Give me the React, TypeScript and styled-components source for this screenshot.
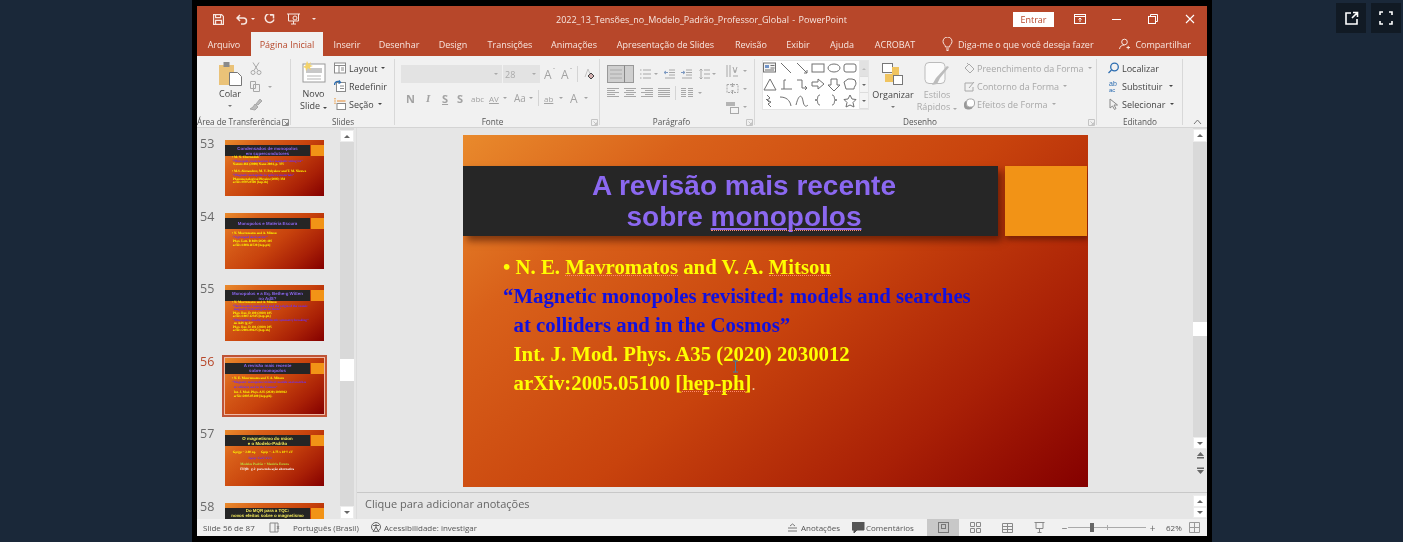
import React from "react";
import styled, { createGlobalStyle } from "styled-components";

const Global = createGlobalStyle`
  html, body { margin: 0; padding: 0; background: #1a2839; }
  * { box-sizing: border-box; }
`;

const Page = styled.div`
  position: relative;
  width: 1403px;
  height: 542px;
  overflow: hidden;
  background: #1a2839;
  display: flex;
  justify-content: center;
  padding-left: 1px;
  font-family: "Open Sans", "Liberation Sans", sans-serif;
`;

const Frame = styled.div`
  width: 1020px;
  height: 542px;
  background: #000;
  padding: 6px 5px;
`;

const Win = styled.div`
  position: relative;
  width: 1010px;
  height: 530px;
  display: flex;
  flex-direction: column;
  background: #e6e6e6;
  filter: blur(0.35px);
`;

const TitleBar = styled.div`
  height: 26px;
  background: #b7472a;
  display: flex;
  align-items: center;
  color: #f7e6e0;
  font-size: 9px;
`;

const Qat = styled.div`
  width: 340px;
  display: flex;
  align-items: center;
  padding-left: 16px;
`;

const DocTitle = styled.div`
  flex: 1;
  text-align: center;
  font-size: 9px;
  word-spacing: 1px;
  padding-right: 147px;
  white-space: nowrap;
`;

const SignIn = styled.div`
  width: 41px;
  height: 15px;
  background: #fff;
  color: #b7472a;
  font-size: 9px;
  display: flex;
  align-items: center;
  justify-content: center;
  margin-right: 20px;
`;

const WinBtns = styled.div`
  display: flex;
  align-items: center;
  width: 133px;
  color: #fff;
`;

const Tabs = styled.div`
  height: 24px;
  background: #b7472a;
  display: flex;
  align-items: stretch;
  font-size: 9px;
  color: #f7e6e0;
`;

const Tab = styled.div<{ $active?: boolean; $w: number }>`
  width: ${(p) => p.$w}px;
  display: flex;
  align-items: center;
  justify-content: center;
  white-space: nowrap;
  background: ${(p) => (p.$active ? "#f1f1f1" : "transparent")};
  color: ${(p) => (p.$active ? "#b7472a" : "inherit")};
`;

const TabSpacer = styled.div`
  flex: 1;
`;

const Tell = styled.div`
  display: flex;
  align-items: center;
  gap: 5px;
  width: 182px;
  padding-left: 18px;
  white-space: nowrap;
`;

const Share = styled.div`
  display: flex;
  align-items: center;
  gap: 5px;
  padding-right: 16px;
`;

const Ribbon = styled.div`
  height: 72px;
  background: #f1f1f1;
  border-bottom: 1px solid #d4d4d4;
  display: flex;
  font-size: 9px;
  color: #444;
`;

const Group = styled.div<{ $w: number; $last?: boolean }>`
  width: ${(p) => p.$w}px;
  position: relative;
  display: flex;
  flex-direction: column;
  padding-top: 5px;
  &::after {
    content: "";
    display: ${(p) => (p.$last ? "none" : "block")};
    position: absolute;
    right: 0;
    top: 3px;
    bottom: 2px;
    width: 1px;
    background: #d8d8d8;
  }
`;

const GroupBody = styled.div<{ $pl?: number }>`
  flex: 1;
  display: flex;
  min-height: 0;
  padding-left: ${(p) => p.$pl ?? 0}px;
`;

const GroupLabel = styled.div<{ $pr?: number }>`
  height: 11px;
  text-align: center;
  font-size: 8.2px;
  line-height: 11px;
  color: #555;
  white-space: nowrap;
  padding-right: ${(p) => p.$pr ?? 0}px;
`;

const Launcher = styled.svg<{ $c?: string }>`
  position: absolute;
  right: 2px;
  bottom: 1px;
  fill: none;
  stroke: ${(p) => p.$c ?? "#888"};
`;

const BigBtn = styled.div<{ $w: number; $muted?: boolean }>`
  width: ${(p) => p.$w}px;
  display: flex;
  flex-direction: column;
  align-items: center;
  font-size: 9px;
  line-height: 12px;
  color: ${(p) => (p.$muted ? "#aaa" : "#444")};
  text-align: center;
  white-space: nowrap;
`;

const BigLabel = styled.span<{ $mt?: number }>`
  margin-top: ${(p) => p.$mt ?? 0}px;
`;

const SmallCol = styled.div<{ $gap?: number; $ml?: number; $pl?: number; $mt?: number }>`
  display: flex;
  flex-direction: column;
  gap: ${(p) => p.$gap ?? 4}px;
  margin-left: ${(p) => p.$ml ?? 0}px;
  padding-left: ${(p) => p.$pl ?? 0}px;
  margin-top: ${(p) => p.$mt ?? 0}px;
`;

const SmallRow = styled.div<{ $muted?: boolean; $h?: number; $gap?: number; $mt?: number }>`
  height: ${(p) => p.$h ?? 14}px;
  display: flex;
  align-items: center;
  gap: ${(p) => p.$gap ?? 3}px;
  margin-top: ${(p) => p.$mt ?? 0}px;
  white-space: nowrap;
  font-size: 9px;
  color: ${(p) => (p.$muted ? "#a8a8a8" : "#444")};
`;

const Caret = styled.span<{
  $ml?: number;
  $mr?: number;
  $mt?: number;
  $up?: boolean;
  $s?: number;
  $c?: string;
}>`
  display: inline-block;
  flex-shrink: 0;
  width: 0;
  height: 0;
  margin-left: ${(p) => p.$ml ?? 0}px;
  margin-right: ${(p) => p.$mr ?? 0}px;
  margin-top: ${(p) => p.$mt ?? 0}px;
  border-left: ${(p) => p.$s ?? 2}px solid transparent;
  border-right: ${(p) => p.$s ?? 2}px solid transparent;
  border-top: ${(p) => (p.$up ? "none" : `${p.$s ?? 2}px solid ${p.$c ?? "currentColor"}`)};
  border-bottom: ${(p) => (p.$up ? `${p.$s ?? 2}px solid ${p.$c ?? "currentColor"}` : "none")};
`;

const FontBox = styled.div`
  width: 101px;
  height: 18px;
  background: #e3e3e3;
  display: flex;
  justify-content: flex-end;
  align-items: center;
  padding-right: 4px;
  color: #aaa;
`;

const SizeBox = styled.div`
  width: 37px;
  height: 18px;
  background: #e3e3e3;
  margin-left: 1px;
  display: flex;
  align-items: center;
  justify-content: space-between;
  padding: 0 4px 0 2px;
  color: #aaa;
  font-size: 9px;
`;

const FontRow = styled.div`
  display: flex;
  align-items: center;
  padding-left: 6px;
  margin-top: 4px;
  height: 18px;
`;

const GrowBtn = styled.span<{ $ml?: number }>`
  display: inline-flex;
  align-items: flex-start;
  gap: 1px;
  margin-left: ${(p) => p.$ml ?? 0}px;
  font-size: 12px;
  color: #a3a3a3;
  width: 16px;
`;

const Divider = styled.span<{ $h?: number; $ml?: number; $mr?: number }>`
  display: inline-block;
  flex-shrink: 0;
  width: 1px;
  height: ${(p) => p.$h ?? 16}px;
  background: #d4d4d4;
  margin-left: ${(p) => p.$ml ?? 0}px;
  margin-right: ${(p) => p.$mr ?? 0}px;
`;

const FmtRow = styled.div`
  display: flex;
  align-items: center;
  padding-left: 11px;
  height: 18px;
  margin-top: 6px;
  color: #a3a3a3;
`;

const Fmt = styled.span<{ $w: number; $u?: boolean; $i?: boolean; $s?: number; $n?: boolean }>`
  width: ${(p) => p.$w}px;
  font-size: ${(p) => p.$s ?? 11}px;
  font-weight: ${(p) => (p.$n ? "normal" : "bold")};
  font-style: ${(p) => (p.$i ? "italic" : "normal")};
  font-family: ${(p) => (p.$i ? '"Liberation Serif", serif' : "inherit")};
  text-decoration: ${(p) => (p.$u ? "underline" : "none")};
  white-space: nowrap;
  flex-shrink: 0;
`;

const ParaWrap = styled.div`
  display: flex;
  padding: 4px 0 0 7px;
`;

const ParaMain = styled.div`
  width: 119px;
`;

const ParaSide = styled.div`
  display: flex;
  flex-direction: column;
  gap: 1px;
  margin-top: -3px;
`;

const Gallery = styled.div`
  width: 107px;
  height: 50px;
  background: #fff;
  margin: -1px 0 0 7px;
  border: 1px solid #e4e4e4;
  display: flex;
`;

const GalleryRail = styled.div`
  width: 11px;
  display: flex;
  flex-direction: column;
  margin-left: auto;
  border-left: 1px solid #e6e6e6;
`;

const RailBtn = styled.div<{ $off?: boolean }>`
  flex: 1;
  background: ${(p) => (p.$off ? "#e2e2e2" : "#f4f4f4")};
  border-bottom: 1px solid #ddd;
  display: flex;
  align-items: center;
  justify-content: center;
  color: #666;
`;

const ShapeGrid = styled.div`
  display: grid;
  grid-template-columns: repeat(6, 16px);
  grid-auto-rows: 16px;
  padding: 1px 0 0 0;
  color: #707070;
`;

const Content = styled.div`
  flex: 1;
  display: flex;
  min-height: 0;
`;

const SidePane = styled.div`
  width: 143px;
  display: flex;
  background: #e6e6e6;
  overflow: hidden;
`;

const ThumbList = styled.div`
  width: 143px;
  display: flex;
  flex-direction: column;
  overflow: hidden;
  padding: 12px 0 0 3px;
  gap: 16.6px;
`;

const ThumbRow = styled.div`
  display: flex;
  gap: 12px;
  flex-shrink: 0;
`;

const ThumbNum = styled.div<{ $on?: boolean }>`
  width: 13px;
  font-size: 12.5px;
  line-height: 13px;
  margin-top: -3px;
  color: ${(p) => (p.$on ? "#b7472a" : "#6a6a6a")};
`;

const ThumbOuter = styled.div<{ $on?: boolean }>`
  width: 99px;
  height: 56px;
  outline: ${(p) => (p.$on ? "2px solid #bf5436" : "none")};
  outline-offset: ${(p) => (p.$on ? "1px" : "0")};
  box-shadow: ${(p) => (p.$on ? "0 0 0 1px #efb9a6" : "none")};
`;

const Gradient = styled.div`
  background: linear-gradient(140deg, #e98a2c 0%, #d9611a 22%, #c8430d 52%, #a92006 78%, #840000 100%);
`;

const ThumbSlide = styled(Gradient)`
  width: 99px;
  height: 56px;
  overflow: hidden;
  display: flex;
  flex-direction: column;
  text-rendering: geometricPrecision;
`;

const ThumbHead = styled.div`
  margin-top: 5px;
  height: 11px;
  display: flex;
  gap: 1px;
  flex-shrink: 0;
`;

const ThumbBand = styled.div<{ $yellow?: boolean }>`
  width: 85px;
  background: #252525;
  color: ${(p) => (p.$yellow ? "#f2e85a" : "#8b66f0")};
  font: bold 4.4px/5px "Liberation Sans", sans-serif;
  display: flex;
  align-items: center;
  justify-content: center;
  text-align: center;
`;

const ThumbBox = styled.div`
  width: 13px;
  background: #f29316;
`;

const ThumbLines = styled.div<{ $pt: number; $lh: number }>`
  padding: ${(p) => p.$pt}px 0 0 7px;
  font: bold 3.3px/${(p) => p.$lh}px "Liberation Serif", serif;
  white-space: pre;
`;

const ThumbLine = styled.div<{ $c: string }>`
  color: ${(p) => p.$c};
`;

const ScrollTrack = styled.div<{ $pt?: number; $h?: number }>`
  width: 14px;
  flex-shrink: 0;
  height: ${(p) => (p.$h ? `${p.$h}px` : "auto")};
  padding-top: ${(p) => p.$pt ?? 0}px;
  background: #d9d9d9;
  display: flex;
  flex-direction: column;
  align-items: center;
`;

const LeftTrack = styled(ScrollTrack)`
  margin-right: 2px;
`;

const ScrollBtn = styled.div<{ $h?: number }>`
  width: 14px;
  height: ${(p) => p.$h ?? 12}px;
  background: #fff;
  border: 1px solid #ececec;
  display: flex;
  align-items: center;
  justify-content: center;
  color: #666;
  flex-shrink: 0;
`;

const ScrollThumb = styled.div<{ $h: number; $top: number }>`
  width: 14px;
  height: ${(p) => p.$h}px;
  margin-top: ${(p) => p.$top}px;
  background: #fff;
  flex-shrink: 0;
`;

const Fill = styled.div`
  flex: 1;
`;

const MainPane = styled.div`
  flex: 1;
  display: flex;
  flex-direction: column;
  min-width: 0;
  border-left: 1px solid #dcdcdc;
`;

const SlideArea = styled.div`
  height: 365px;
  display: flex;
  flex-shrink: 0;
  border-bottom: 1px solid #c8c8c8;
`;

const SlideCanvas = styled.div`
  flex: 1;
  padding: 7px 0 0 106px;
`;

const MainRail = styled.div`
  width: 14px;
  display: flex;
  flex-direction: column;
`;

const PageNav = styled.div`
  height: 43px;
  display: flex;
  flex-direction: column;
  align-items: center;
  gap: 6px;
  padding-top: 3px;
  color: #666;
`;

const PageNavBtn = styled.svg`
  display: block;
  fill: currentColor;
  stroke: none;
`;

const MainSlide = styled(Gradient)`
  width: 625px;
  height: 352px;
  display: flex;
  flex-direction: column;
  overflow: hidden;
`;

const SlideHead = styled.div`
  margin-top: 31px;
  height: 70px;
  display: flex;
  gap: 7px;
  flex-shrink: 0;
`;

const SlideBand = styled.div`
  width: 535px;
  background: #262626;
  box-shadow: 4px 5px 7px rgba(50, 10, 0, 0.55);
  color: #8b68f0;
  font: bold 28px/30.5px "Liberation Sans", sans-serif;
  text-align: center;
  padding: 5px 0 0 27px;
`;

const SlideBox = styled.div`
  width: 82px;
  background: #f29316;
  box-shadow: 1px 4px 5px rgba(50, 10, 0, 0.45);
`;

const Spell = styled.span<{ $ul?: boolean }>`
  position: relative;
  text-decoration: ${(p) => (p.$ul ? "underline" : "none")};
  text-decoration-thickness: 2px;
  text-underline-offset: 2px;
  &::after {
    content: "";
    position: absolute;
    left: 0;
    right: 0;
    bottom: ${(p) => (p.$ul ? "1px" : "2px")};
    border-bottom: 1px dotted #ff8a70;
  }
`;

const SlideBody = styled.div`
  padding: 16px 0 0 40px;
  font: bold 20.8px/29px "Liberation Serif", serif;
  white-space: nowrap;
`;

const BodyLine = styled.div<{ $blue?: boolean; $indent?: boolean }>`
  color: ${(p) => (p.$blue ? "#1010e0" : "#ffff00")};
  padding-left: ${(p) => (p.$indent ? "10.5px" : "0")};
`;

const EndDot = styled.span`
  color: #e8c49a;
  font-weight: normal;
  font-size: 16px;
`;

const Cursor = styled.span`
  position: absolute;
  left: 534.5px;
  top: 354px;
  color: #3f7fa8;
`;

const Notes = styled.div`
  flex: 1;
  display: flex;
  min-height: 0;
`;

const NotesText = styled.div`
  flex: 1;
  padding: 3px 0 0 8px;
  font-size: 11px;
  line-height: 16px;
  color: #666;
`;

const NotesRail = styled.div`
  width: 14px;
  padding-top: 2px;
  display: flex;
  flex-direction: column;
`;

const StatusBar = styled.div`
  height: 17px;
  background: #f1f1f1;
  display: flex;
  align-items: center;
  font-size: 8px;
  color: #555;
  white-space: nowrap;
`;

const StatusItem = styled.div<{ $w: number; $pl?: number; $gap?: number }>`
  width: ${(p) => p.$w}px;
  flex-shrink: 0;
  padding-left: ${(p) => p.$pl ?? 0}px;
  display: flex;
  align-items: center;
  gap: ${(p) => p.$gap ?? 3}px;
`;

const ViewBtn = styled.div<{ $on?: boolean }>`
  width: 32px;
  height: 17px;
  display: flex;
  align-items: center;
  justify-content: center;
  background: ${(p) => (p.$on ? "#c8c8c8" : "transparent")};
`;

const Zoom = styled.div`
  display: flex;
  align-items: center;
  width: 105px;
  padding-left: 6px;
  color: #666;
  font-size: 10px;
`;

const ZoomSign = styled.span`
  width: 7px;
  text-align: center;
`;

const ZoomTrack = styled.div`
  width: 78px;
  height: 1px;
  background: #aaa;
  position: relative;
  margin-right: 3px;
`;

const ZoomKnob = styled.span`
  position: absolute;
  left: 22px;
  top: -4px;
  width: 4px;
  height: 9px;
  background: #666;
`;

const ZoomTick = styled.span`
  position: absolute;
  left: 39px;
  top: -2px;
  width: 1px;
  height: 5px;
  background: #aaa;
`;

const Overlay = styled.div`
  position: absolute;
  top: 3px;
  left: 1336px;
  display: flex;
  gap: 5px;
`;

const OverlayBtn = styled.div`
  width: 30px;
  height: 30px;
  background: #111a24;
  display: flex;
  align-items: center;
  justify-content: center;
  color: #fff;
`;

const Ico = styled.svg<{ $ml?: number; $mr?: number; $mt?: number; $c?: string; $b?: number }>`
  display: block;
  flex-shrink: 0;
  fill: none;
  stroke: currentColor;
  margin-left: ${(p) => p.$ml ?? 0}px;
  margin-right: ${(p) => p.$mr ?? 0}px;
  margin-top: ${(p) => p.$mt ?? 0}px;
  margin-bottom: ${(p) => p.$b ?? 0}px;
  color: ${(p) => p.$c ?? "inherit"};
`;

type Thumb = {
  n: number;
  on?: boolean;
  yellow?: boolean;
  pt: number;
  lh: number;
  title: string[];
  lines: [string, string][];
};

const Y = "#ffff00";
const B = "#6a30ff";

const thumbs: Thumb[] = [
  {
    n: 53,
    pt: 0,
    lh: 3.6,
    title: ["Condensados de monopolos", "em supercondutores"],
    lines: [
      [Y, "• M. N. Chernodub"],
      [B, " “Monopole condensation in a magnetic string ice”"],
      [Y, " Nature 461 (2009) Nano 2004, p. 375"],
      [Y, " "],
      [Y, "• M.S. Alexandrov, M. V. Polyakov and T. M. Nieuwe"],
      [B, " “Magnetic monopoles in spin ice materials”"],
      [Y, " Phenomenological Physics (2005) 358"],
      [Y, " arXiv:0705.0369 [hep-th]"],
    ],
  },
  {
    n: 54,
    pt: 2,
    lh: 4,
    title: ["Monopolos e Matéria Escura"],
    lines: [
      [Y, "• N. Mavromatos and A. Mitsou"],
      [B, " “A grouped dark sector”"],
      [Y, " Phys. Lett. B 860 (2020) 105"],
      [Y, " arXiv:1908.11520 [hep-ph]"],
    ],
  },
  {
    n: 55,
    pt: 0,
    lh: 3.5,
    title: ["Monopolos e a Eq. Bethe-g Witten", "no AdS?"],
    lines: [
      [Y, "• N. Mavromatos and A. Mitsou"],
      [B, " “Dark matter monopoles and the origin of the cosmic"],
      [B, "  magnetic field and galactic fields”"],
      [Y, " Phys. Rev. D 100 (2020) 105"],
      [Y, " arXiv:1907.12345 [hep-ph]"],
      [B, " “Monopoles, duality and electric symmetry breaking”"],
      [Y, "  on AdS (g-2)”"],
      [Y, " Phys. Rev. D 101 (2020) 205"],
      [Y, " arXiv:2001.09125 [hep-th]"],
    ],
  },
  {
    n: 56,
    on: true,
    pt: 2,
    lh: 4.6,
    title: ["A revisão mais recente", "sobre monopolos"],
    lines: [
      [Y, "• N. E. Mavromatos and V. A. Mitsou"],
      [B, "“Magnetic monopoles revisited: models and searches"],
      [B, "  at colliders and in the Cosmos”"],
      [Y, "  Int. J. Mod. Phys. A35 (2020) 2030012"],
      [Y, "  arXiv:2005.05100 [hep-ph]."],
    ],
  },
  {
    n: 57,
    yellow: true,
    pt: 4,
    lh: 5.6,
    title: ["O magnetismo do múon", "e o Modelo-Padrão"],
    lines: [
      [Y, " Gμ/gμ = 2.00 eq.      Gμ/μ = -1.75 x 10⁻¹¹ eV"],
      [B, "                    Gμ/μ ² GeV/eV/c"],
      ["#b8e040", "          Modelos Padrão + Matéria Escura"],
      ["#ffffff", "          FIQB:  g-2  para toda ação alternativa"],
    ],
  },
  {
    n: 58,
    yellow: true,
    pt: 0,
    lh: 4,
    title: ["Do MQR para a TQC:", "novos efeitos sobre o magnetismo"],
    lines: [],
  },
];

const tabs: [string, number, boolean?][] = [
  ["Arquivo", 54],
  ["Página Inicial", 72, true],
  ["Inserir", 48],
  ["Desenhar", 56],
  ["Design", 52],
  ["Transições", 62],
  ["Animações", 66],
  ["Apresentação de Slides", 117],
  ["Revisão", 54],
  ["Exibir", 40],
  ["Ajuda", 48],
  ["ACROBAT", 58],
];

const shapes = [
  <g key="a"><rect x=".5" y="1" width="12" height="9" fill="#f4f4f4" /><rect x="2" y="3" width="4" height="3" fill="#6f93c8" stroke="none" /><path d="M7.5 3.5h4M7.5 6h4M2 8h9" /></g>,
  <path key="b" d="M2 1l10 10" />,
  <path key="c" d="M2 1l10 10M12 11l-3 0M12 11l0 -3" />,
  <rect key="d" x="1" y="2" width="12" height="8" />,
  <ellipse key="e" cx="7" cy="6" rx="6" ry="4" />,
  <rect key="f" x="1" y="2" width="12" height="8" rx="2" />,
  <path key="g" d="M7 1l6 11H1z" />,
  <path key="h" d="M2 11h3V2h2M5 11h8" />,
  <path key="i" d="M2 2h5v8h4M10 8l2 2-2 2" />,
  <path key="j" d="M1 4h6V1l6 5-6 5V8H1z" />,
  <path key="k" d="M4 1h6v6h3l-6 6-6-6h3z" />,
  <path key="l" d="M1 4l4-3h4a4 4 0 0 1 4 4c0 3-2 3-2 6H3z" />,
  <path key="m" d="M4 1l3 3-3 2 4 2-3 2 3 3M3 5l3 3" />,
  <path key="n" d="M1 3c6 0 10 3 11 9" />,
  <path key="o" d="M1 11c3-12 6-10 7-4s3 6 5 4" />,
  <path key="p" d="M9 1c-3 0-2 4-3 5l-2 0 2 0c1 1 0 5 3 5" />,
  <path key="q" d="M5 1c3 0 2 4 3 5l2 0-2 0c-1 1 0 5-3 5" />,
  <path key="r" d="M7 1l2 4 4 .5-3 3 1 4.5-4-2-4 2 1-4.5-3-3 4-.5z" />,
];

const LauncherIcon = ({ c }: { c?: string }) => (
  <Launcher $c={c} width="7" height="7" viewBox="0 0 7 7" strokeWidth="1">
    <path d="M.5 .5h6v6h-6zM2.5 2.5l3 3M5.5 3.500v2h-2" />
  </Launcher>
);

const BulletIcon = () => (
  <Ico width="11" height="12" viewBox="0 0 11 12" strokeWidth="1">
    <path d="M3 2h8M3 6h8M3 10h8" />
    <path d="M0 2h1.5M0 6h1.5M0 10h1.5" />
  </Ico>
);

const IndentIcon = ({ back }: { back?: boolean }) => (
  <Ico width="11" height="12" viewBox="0 0 11 12" strokeWidth="1">
    <path d="M5 2h6M5 4.5h6M5 7h6M1 10h10" />
    <path d={back ? "M4 4.5H0M2 3L0 4.5 2 6" : "M0 4.5h4M2 3l2 1.5L2 6"} stroke="#7c98c0" />
  </Ico>
);

const AlignIcon = ({ a }: { a: string }) => (
  <Ico width="12" height="12" viewBox="0 0 12 12" strokeWidth="1">
    <path d={a} />
  </Ico>
);

const alignPaths = [
  "M0 1.5h12M0 3.5h8M0 5.5h12M0 7.5h8M0 9.5h12",
  "M0 1.5h12M2 3.5h8M0 5.5h12M2 7.5h8M0 9.5h12",
  "M0 1.5h12M4 3.5h8M0 5.5h12M4 7.5h8M0 9.5h12",
  "M0 1.5h12M0 3.5h12M0 5.5h12M0 7.5h12M0 9.5h12",
];

export default function App() {
  return (
    <Page>
      <Global />
      <Frame>
        <Win>
          <TitleBar>
            <Qat>
              <Ico width="11" height="11" viewBox="0 0 11 11" strokeWidth="1.2">
                <path d="M.6 .6h8l1.8 1.8v8H.6zM2.6 .6v3h5v-3M2.6 10.4v-4h5.8v4" />
              </Ico>
              <Ico $ml={12} width="12" height="11" viewBox="0 0 12 11" strokeWidth="1.5">
                <path d="M4 1L1 4l3 3M1 4h6.5a3 3 0 0 1 0 6H5" />
              </Ico>
              <Caret $ml={3} $mr={9} />
              <Ico width="11" height="11" viewBox="0 0 11 11" strokeWidth="1.5">
                <path d="M6 1h3.5v3.5M9.5 1.5A4.5 4.5 0 1 0 10 5.500" />
              </Ico>
              <Ico $ml={11} width="15" height="12" viewBox="0 0 15 12" strokeWidth="1">
                <path d="M1 1h13M2.5 1v7h10V1M7.5 8v3M5 11h5" />
                <circle cx="9" cy="5" r="2" />
              </Ico>
              <Caret $ml={11} />
            </Qat>
            <DocTitle>2022_13_Tensões_no_Modelo_Padrão_Professor_Global - PowerPoint</DocTitle>
            <SignIn>Entrar</SignIn>
            <WinBtns>
              <Ico width="12" height="10" viewBox="0 0 12 10" strokeWidth="1">
                <rect x=".5" y=".5" width="11" height="9" />
                <path d="M.5 2.5h11M6 8V4M4.5 5.500L6 4l1.500 1.500" />
              </Ico>
              <Ico $ml={26} width="9" height="10" viewBox="0 0 9 10" strokeWidth="1">
                <path d="M0 5.5h9" />
              </Ico>
              <Ico $ml={27} width="10" height="10" viewBox="0 0 10 10" strokeWidth="1">
                <rect x=".5" y="2.5" width="7" height="7" />
                <path d="M2.5 2.5v-2h7v7h-2" />
              </Ico>
              <Ico $ml={27} width="10" height="10" viewBox="0 0 10 10" strokeWidth="1.1">
                <path d="M1 1l8 8M9 1l-8 8" />
              </Ico>
            </WinBtns>
          </TitleBar>
          <Tabs>
            {tabs.map(([t, w, a]) => (
              <Tab key={t} $w={w} $active={a}>
                {t}
              </Tab>
            ))}
            <Tell>
              <Ico width="11" height="14" viewBox="0 0 11 14" strokeWidth="1">
                <path d="M3.5 10c0-2-2.5-3-2.5-5.5a4.5 4.5 0 0 1 9 0C10 7 7.5 8 7.5 10zM4 12h3M4.5 13.5h2" />
              </Ico>
              Diga-me o que você deseja fazer
            </Tell>
            <TabSpacer />
            <Share>
              <Ico width="11" height="12" viewBox="0 0 11 12" strokeWidth="1">
                <circle cx="5.5" cy="4" r="2.8" />
                <path d="M.5 11c.5-3 2.5-4 5-4M7.5 9.5h3.5M9.2 7.8v3.5" />
              </Ico>
              Compartilhar
            </Share>
          </Tabs>
          <Ribbon>
            <Group $w={94}>
              <GroupBody $pl={13}>
                <BigBtn $w={40}>
                  <Ico width="23" height="24" viewBox="0 0 23 24" stroke="none" $mt={1}>
                    <rect x="0" y="3" width="15" height="20" fill="#eac278" stroke="none" />
                    <rect x="4.5" y="0" width="6" height="5" fill="#8a8a8a" stroke="none" />
                    <path d="M10.5 10.5h8l4 4v9h-12z" fill="#fff" stroke="#777" />
                  </Ico>
                  <BigLabel $mt={2}>Colar</BigLabel>
                  <Caret $mt={5} $c="#777" />
                </BigBtn>
                <SmallCol $gap={4} $mt={1}>
                  <SmallRow $muted $h={13}>
                    <Ico width="12" height="13" viewBox="0 0 12 13" strokeWidth="1">
                      <path d="M3 .5l5 8M9 .5L4 8.5" />
                      <circle cx="3" cy="10.5" r="2" />
                      <circle cx="9" cy="10.5" r="2" />
                    </Ico>
                  </SmallRow>
                  <SmallRow $muted $h={15} $gap={8}>
                    <Ico width="10" height="11" viewBox="0 0 10 11" strokeWidth="1">
                      <path d="M.5 .5h5v7h-5zM3.5 3.5h6v7h-6z" />
                    </Ico>
                    <Caret />
                  </SmallRow>
                  <SmallRow $muted $h={14}>
                    <Ico width="12" height="12" viewBox="0 0 12 12" stroke="none">
                      <path d="M6 5l4-5 2 2-4 4zM5 5l3 3-3 3-5-1 3-2z" fill="#bcbcbc" />
                    </Ico>
                  </SmallRow>
                </SmallCol>
              </GroupBody>
              <GroupLabel $pr={14}>Área de Transferência</GroupLabel>
              <LauncherIcon />
            </Group>
            <Group $w={104}>
              <GroupBody $pl={2}>
                <BigBtn $w={41}>
                  <Ico width="24" height="22" viewBox="0 0 24 22" strokeWidth="1">
                    <rect x="1" y="3" width="22" height="18" fill="#fff" stroke="#9a9a9a" />
                    <rect x="4" y="7" width="16" height="5" fill="#c8c8c8" stroke="none" />
                    <path d="M5 15h14M5 18h14" stroke="#b5b5b5" />
                    <path d="M5 0l1.5 3L9 1 8 4l3 1-3 1 1 3-3-2-2 3-.5-3L1 6l2.5-1.5z" fill="#f3d36a" stroke="none" />
                  </Ico>
                  <BigLabel $mt={5}>Novo</BigLabel>
                  <span>
                    Slide
                    <Caret $ml={3} />
                  </span>
                </BigBtn>
                <SmallCol $gap={4}>
                  <SmallRow>
                    <Ico width="12" height="12" viewBox="0 0 12 12" strokeWidth="1" $c="#8a8a8a">
                      <rect x=".5" y="1" width="11" height="10" fill="#fff" />
                      <path d="M.5 3.5h11M5 3.5V11M7 6h3M7 8h3" />
                    </Ico>
                    Layout
                    <Caret $ml={1} />
                  </SmallRow>
                  <SmallRow>
                    <Ico width="12" height="12" viewBox="0 0 12 12" strokeWidth="1" $c="#8a8a8a">
                      <rect x="2.5" y="2.5" width="9" height="9" fill="#fff" />
                      <path d="M6 6h4M6 8.5h4" />
                      <path d="M.5 5a3.5 3.5 0 0 1 6-2.5M5 .5l1.5 2-2 1" stroke="#2b6cb0" strokeWidth="1.3" />
                    </Ico>
                    Redefinir
                  </SmallRow>
                  <SmallRow>
                    <Ico width="12" height="12" viewBox="0 0 12 12" strokeWidth="1" $c="#8a8a8a">
                      <rect x="3" y="5.5" width="8.5" height="6" fill="#fff" />
                      <path d="M3 3h8.5" stroke="#e58a30" />
                      <path d="M0 .8h2M0 3h2M0 5.2h2" stroke="#e9a860" />
                    </Ico>
                    Seção
                    <Caret $ml={1} />
                  </SmallRow>
                </SmallCol>
              </GroupBody>
              <GroupLabel>Slides</GroupLabel>
            </Group>
            <Group $w={205}>
              <GroupBody>
                <div>
                  <FontRow>
                    <FontBox>
                      <Caret />
                    </FontBox>
                    <SizeBox>
                      28
                      <Caret />
                    </SizeBox>
                    <GrowBtn $ml={4}>
                      A
                      <Caret $s={1.5} $up $mt={2} />
                    </GrowBtn>
                    <GrowBtn $ml={1}>
                      A
                      <Caret $s={1.5} $mt={2} />
                    </GrowBtn>
                    <Divider $mr={6} />
                    <Ico width="10" height="12" viewBox="0 0 10 12" stroke="none">
                      <path d="M1 9L4 1l2 5" fill="none" stroke="#c4c4c4" />
                      <path d="M4 8l3-3 3 3-3 3z" fill="#d4b0b0" />
                    </Ico>
                  </FontRow>
                  <FmtRow>
                    <Fmt $w={20}>N</Fmt>
                    <Fmt $w={16} $i>I</Fmt>
                    <Fmt $w={15} $u>S</Fmt>
                    <Fmt $w={14}>S</Fmt>
                    <Fmt $w={18} $s={8} $n>abc</Fmt>
                    <Fmt $w={14} $s={8} $n $u>AV</Fmt>
                    <Caret $mr={7} />
                    <Fmt $w={15} $s={10} $n>Aa</Fmt>
                    <Caret $mr={5} />
                    <Divider $mr={5} />
                    <Fmt $w={15} $s={8} $n $u>ab</Fmt>
                    <Caret $mr={7} />
                    <Fmt $w={14} $s={12} $n>A</Fmt>
                    <Caret />
                  </FmtRow>
                </div>
              </GroupBody>
              <GroupLabel $pr={10}>Fonte</GroupLabel>
              <LauncherIcon c="#c4c4c4" />
            </Group>
            <Group $w={155}>
              <GroupBody>
                <ParaWrap>
                  <ParaMain>
                    <SmallRow $muted $h={18} $gap={0}>
                      <Ico width="27" height="18" viewBox="0 0 27 18" strokeWidth="1" $mr={6}>
                        <rect x=".5" y=".5" width="26" height="17" fill="#cfcfcf" stroke="#999" />
                        <path d="M17.5 .5v17" stroke="#888" />
                        <path d="M3 5h12M3 9h12M3 13h12" stroke="#aaa" />
                      </Ico>
                      <BulletIcon />
                      <Caret $ml={3} $mr={6} />
                      <IndentIcon back />
                      <Ico width="6" height="2" viewBox="0 0 6 2" />
                      <IndentIcon />
                      <Ico $ml={7} width="11" height="12" viewBox="0 0 11 12" strokeWidth="1">
                        <path d="M2 1v10M.5 2.5L2 1l1.5 1.5M.5 9.5L2 11l1.5-1.5M5 2h6M5 6h6M5 10h6" />
                      </Ico>
                      <Caret $ml={2} />
                    </SmallRow>
                    <SmallRow $muted $h={18} $gap={5} $mt={1}>
                      {alignPaths.map((a) => (
                        <AlignIcon key={a} a={a} />
                      ))}
                      <Divider $h={14} />
                      <Ico width="12" height="12" viewBox="0 0 12 12" strokeWidth="1">
                        <path d="M0 1.5h5M7 1.5h5M0 3.5h5M7 3.5h5M0 5.5h5M7 5.5h5M0 7.5h5M7 7.5h5M0 9.5h5M7 9.5h5" />
                      </Ico>
                      <Caret />
                    </SmallRow>
                  </ParaMain>
                  <ParaSide>
                    <SmallRow $muted $h={18} $gap={4}>
                      <Ico width="13" height="14" viewBox="0 0 13 14" strokeWidth="1">
                        <path d="M1 1v12M4 1v12M7 3l2 6 2-6M7.5 7h3M7 12h5" />
                      </Ico>
                      <Caret />
                    </SmallRow>
                    <SmallRow $muted $h={18} $gap={4}>
                      <Ico width="13" height="13" viewBox="0 0 13 13" strokeWidth="1">
                        <rect x="1" y="2.5" width="11" height="8" strokeDasharray="2 1" />
                        <path d="M6.5 1v4M5 3.5L6.5 5 8 3.5M6.5 12V8M5 9.5L6.5 8 8 9.5" />
                      </Ico>
                      <Caret />
                    </SmallRow>
                    <SmallRow $muted $h={18} $gap={4}>
                      <Ico width="13" height="13" viewBox="0 0 13 13" strokeWidth="1">
                        <rect x="0" y="1" width="9" height="4" fill="#b4b4b4" stroke="none" />
                        <rect x="4.5" y="6.5" width="8" height="6" fill="#f4f4f4" />
                      </Ico>
                      <Caret />
                    </SmallRow>
                  </ParaSide>
                </ParaWrap>
              </GroupBody>
              <GroupLabel $pr={12}>Parágrafo</GroupLabel>
              <LauncherIcon c="#c4c4c4" />
            </Group>
            <Group $w={342}>
              <GroupBody>
                <Gallery>
                  <ShapeGrid>
                    {shapes.map((s, i) => (
                      <Ico key={i} width="14" height="14" viewBox="0 0 14 14" strokeWidth="1">
                        {s}
                      </Ico>
                    ))}
                  </ShapeGrid>
                  <GalleryRail>
                    <RailBtn $off>
                      <Caret $up $c="#bbb" />
                    </RailBtn>
                    <RailBtn>
                      <Caret />
                    </RailBtn>
                    <RailBtn>
                      <Caret />
                    </RailBtn>
                  </GalleryRail>
                </Gallery>
                <BigBtn $w={48}>
                  <Ico width="23" height="22" viewBox="0 0 23 22" strokeWidth="1" $mt={2}>
                    <rect x=".5" y=".5" width="10" height="9" fill="#fff" stroke="#777" />
                    <rect x="10" y="4" width="7" height="8" fill="#f0c460" stroke="none" />
                    <rect x="3" y="11" width="8" height="8" fill="#f0c460" stroke="none" />
                    <rect x="11.5" y="12.5" width="9" height="9" fill="#fff" stroke="#777" />
                  </Ico>
                  <BigLabel $mt={4}>Organizar</BigLabel>
                  <Caret $mt={5} $c="#777" />
                </BigBtn>
                <BigBtn $w={40} $muted>
                  <Ico width="26" height="24" viewBox="0 0 26 24" strokeWidth="1" $mt={1}>
                    <rect x="1" y=".5" width="20" height="21" rx="4" fill="#fafafa" stroke="#bbb" />
                    <path d="M25 5l-9 11-3 6-5 1 4-7 11-12z" fill="#bcbcbc" stroke="none" />
                  </Ico>
                  <BigLabel $mt={3}>Estilos</BigLabel>
                  <span>
                    Rápidos
                    <Caret $ml={3} />
                  </span>
                </BigBtn>
                <SmallCol $gap={4} $ml={7}>
                  <SmallRow $muted $gap={2}>
                    <Ico width="11" height="12" viewBox="0 0 11 12" strokeWidth="1">
                      <path d="M5 2l5 5-4 4-5-5zM3 1l2 2" />
                    </Ico>
                    Preenchimento da Forma
                    <Caret $ml={2} />
                  </SmallRow>
                  <SmallRow $muted $gap={2}>
                    <Ico width="11" height="12" viewBox="0 0 11 12" strokeWidth="1">
                      <path d="M9 3H1v8h8V7M5 8l5-6" />
                    </Ico>
                    Contorno da Forma
                    <Caret $ml={2} />
                  </SmallRow>
                  <SmallRow $muted $gap={2}>
                    <Ico width="11" height="12" viewBox="0 0 11 12" strokeWidth="1">
                      <rect x=".5" y="3" width="8" height="8" rx="3" fill="#999" stroke="#999" />
                      <rect x="2.5" y="1" width="8" height="8" rx="3" fill="#fff" />
                    </Ico>
                    Efeitos de Forma
                    <Caret $ml={2} />
                  </SmallRow>
                </SmallCol>
              </GroupBody>
              <GroupLabel $pr={12}>Desenho</GroupLabel>
              <LauncherIcon c="#c4c4c4" />
            </Group>
            <Group $w={86}>
              <GroupBody>
                <SmallCol $gap={4} $pl={11}>
                  <SmallRow>
                    <Ico width="11" height="12" viewBox="0 0 11 12" strokeWidth="1.3" $c="#2b6cb0">
                      <circle cx="6.5" cy="5" r="3.8" />
                      <path d="M3.5 8l-3 3" />
                    </Ico>
                    Localizar
                  </SmallRow>
                  <SmallRow>
                    <Ico width="11" height="12" viewBox="0 0 11 12" stroke="none">
                      <text x="1" y="6" fontSize="7" fill="#2b6cb0" stroke="none" fontFamily="Liberation Sans">ab</text>
                      <text x="1" y="12" fontSize="6" fill="#2b6cb0" stroke="none" fontFamily="Liberation Sans">ac</text>
                    </Ico>
                    Substituir
                    <Caret $ml={4} />
                  </SmallRow>
                  <SmallRow>
                    <Ico width="11" height="12" viewBox="0 0 11 12" strokeWidth="1" $c="#888">
                      <path d="M2 1v9l2.5-2 2 3.5 1.5-1-2-3.5h3.5z" />
                    </Ico>
                    Selecionar
                    <Caret $ml={1} />
                  </SmallRow>
                </SmallCol>
              </GroupBody>
              <GroupLabel>Editando</GroupLabel>
            </Group>
            <Group $w={24} $last>
              <Fill />
              <Ico width="9" height="6" viewBox="0 0 9 6" strokeWidth="1" $ml={10} $b={2} $c="#777">
                <path d="M1 5l3.5-4L8 5" />
              </Ico>
            </Group>
          </Ribbon>
          <Content>
            <SidePane>
              <ThumbList>
                {thumbs.map((t) => (
                  <ThumbRow key={t.n}>
                    <ThumbNum $on={t.on}>{t.n}</ThumbNum>
                    <ThumbOuter $on={t.on}>
                      <ThumbSlide>
                        <ThumbHead>
                          <ThumbBand $yellow={t.yellow}>
                            <div>
                              {t.title.map((l) => (
                                <div key={l}>{l}</div>
                              ))}
                            </div>
                          </ThumbBand>
                          <ThumbBox />
                        </ThumbHead>
                        <ThumbLines $pt={t.pt} $lh={t.lh}>
                          {t.lines.map((l, i) => (
                            <ThumbLine key={i} $c={l[0]}>
                              {l[1]}
                            </ThumbLine>
                          ))}
                        </ThumbLines>
                      </ThumbSlide>
                    </ThumbOuter>
                  </ThumbRow>
                ))}
              </ThumbList>
            </SidePane>
            <LeftTrack $pt={2}>
              <ScrollBtn>
                <Caret $up $s={3} />
              </ScrollBtn>
              <ScrollThumb $h={22} $top={217} />
              <Fill />
              <ScrollBtn $h={13}>
                <Caret $s={3} />
              </ScrollBtn>
            </LeftTrack>
            <MainPane>
              <SlideArea>
                <SlideCanvas>
                  <MainSlide>
                    <SlideHead>
                      <SlideBand>
                        A revisão mais recente
                        <br />
                        sobre <Spell $ul>monopolos</Spell>
                      </SlideBand>
                      <SlideBox />
                    </SlideHead>
                    <SlideBody>
                      <BodyLine>
                        • N. E. <Spell>Mavromatos</Spell> and V. A. <Spell>Mitsou</Spell>
                      </BodyLine>
                      <BodyLine $blue>“Magnetic monopoles revisited: models and searches</BodyLine>
                      <BodyLine $blue $indent>
                        at colliders and in the Cosmos”
                      </BodyLine>
                      <BodyLine $indent>Int. J. Mod. Phys. A35 (2020) 2030012</BodyLine>
                      <BodyLine $indent>
                        arXiv:2005.05100 [<Spell>hep-ph</Spell>]<EndDot>.</EndDot>
                      </BodyLine>
                    </SlideBody>
                  </MainSlide>
                </SlideCanvas>
                <MainRail>
                  <ScrollTrack $pt={1} $h={321}>
                    <ScrollBtn $h={13}>
                      <Caret $up $s={3} />
                    </ScrollBtn>
                    <ScrollThumb $h={14} $top={180} />
                    <Fill />
                    <ScrollBtn>
                      <Caret $s={3} />
                    </ScrollBtn>
                  </ScrollTrack>
                  <PageNav>
                    <PageNavBtn width="7" height="8" viewBox="0 0 7 8">
                      <path d="M3.5 0L7 4H0zM0 5h7v1.500H0z" />
                    </PageNavBtn>
                    <PageNavBtn width="7" height="8" viewBox="0 0 7 8">
                      <path d="M0 1.500h7V3H0zM0 4h7L3.500 8z" />
                    </PageNavBtn>
                  </PageNav>
                </MainRail>
              </SlideArea>
              <Notes>
                <NotesText>Clique para adicionar anotações</NotesText>
                <NotesRail>
                  <ScrollBtn>
                    <Caret $up $s={3} />
                  </ScrollBtn>
                  <ScrollBtn $h={11}>
                    <Caret $s={3} />
                  </ScrollBtn>
                </NotesRail>
              </Notes>
            </MainPane>
          </Content>
          <StatusBar>
            <StatusItem $w={72} $pl={6}>Slide 56 de 87</StatusItem>
            <StatusItem $w={24}>
              <Ico width="11" height="11" viewBox="0 0 11 11" strokeWidth="1" $c="#888">
                <path d="M1 1h8v9H1zM6 1v9M8 4l2 3M10 4L8 7" />
              </Ico>
            </StatusItem>
            <StatusItem $w={77}>Português (Brasil)</StatusItem>
            <StatusItem $w={417} $gap={2}>
              <Ico width="12" height="12" viewBox="0 0 12 12" strokeWidth="1" $c="#666">
                <circle cx="6" cy="5" r="4.5" />
                <path d="M6 2v3l-3 5M6 5l3 5M3 3.5h6" />
              </Ico>
              Acessibilidade: investigar
            </StatusItem>
            <StatusItem $w={65}>
              <Ico width="11" height="9" viewBox="0 0 11 9" strokeWidth="1" $c="#777">
                <path d="M1 5h9M1 8h9M3 3l2.5-2L8 3" />
              </Ico>
              Anotações
            </StatusItem>
            <StatusItem $w={75} $gap={1}>
              <Ico width="13" height="12" viewBox="0 0 13 12" stroke="none">
                <path d="M0 0h12v8H5l-3 3V8H0z" fill="#555" />
              </Ico>
              Comentários
            </StatusItem>
            <ViewBtn $on>
              <Ico width="11" height="11" viewBox="0 0 11 11" strokeWidth="1" $c="#777">
                <rect x=".5" y=".5" width="10" height="10" />
                <rect x="3.5" y="2.5" width="4" height="4" />
              </Ico>
            </ViewBtn>
            <ViewBtn>
              <Ico width="11" height="11" viewBox="0 0 11 11" strokeWidth="1" $c="#888">
                <path d="M.5 .5h4v4h-4zM6.5 .5h4v4h-4zM.5 6.5h4v4h-4zM6.5 6.5h4v4h-4z" />
              </Ico>
            </ViewBtn>
            <ViewBtn>
              <Ico width="11" height="11" viewBox="0 0 11 11" strokeWidth="1" $c="#888">
                <path d="M.5 1.5h10v9h-10zM5.5 1.5v9M.5 4.5h10M.5 7.5h10" />
              </Ico>
            </ViewBtn>
            <ViewBtn>
              <Ico width="11" height="11" viewBox="0 0 11 11" strokeWidth="1" $c="#888">
                <path d="M.5 .5h10M2 .5v6h7v-6M5.5 6.5v4M3.5 10.5h4" />
              </Ico>
            </ViewBtn>
            <Zoom>
              <ZoomSign>−</ZoomSign>
              <ZoomTrack>
                <ZoomKnob />
                <ZoomTick />
              </ZoomTrack>
              <ZoomSign>+</ZoomSign>
            </Zoom>
            <StatusItem $w={29} $pl={6}>62%</StatusItem>
            <StatusItem $w={14}>
              <Ico width="11" height="11" viewBox="0 0 11 11" strokeWidth="1" $c="#999">
                <path d="M.5 .5h10v10h-10zM.5 5.5h10M5.5 .5v10" />
              </Ico>
            </StatusItem>
          </StatusBar>
          <Cursor>
            <Ico width="7" height="13" viewBox="0 0 7 13" strokeWidth="1">
              <path d="M1 1h5M3.5 1v11M1 12h5" />
            </Ico>
          </Cursor>
        </Win>
      </Frame>
      <Overlay>
        <OverlayBtn>
          <Ico width="15" height="15" viewBox="0 0 15 15" strokeWidth="1.6">
            <path d="M7 2H2v11h11V8M8 7l5-5M9 1.5h4.5V6" />
          </Ico>
        </OverlayBtn>
        <OverlayBtn>
          <Ico width="14" height="14" viewBox="0 0 14 14" strokeWidth="1.6">
            <path d="M1 4V1h3M10 1h3v3M13 10v3h-3M4 13H1v-3" />
          </Ico>
        </OverlayBtn>
      </Overlay>
    </Page>
  );
}
